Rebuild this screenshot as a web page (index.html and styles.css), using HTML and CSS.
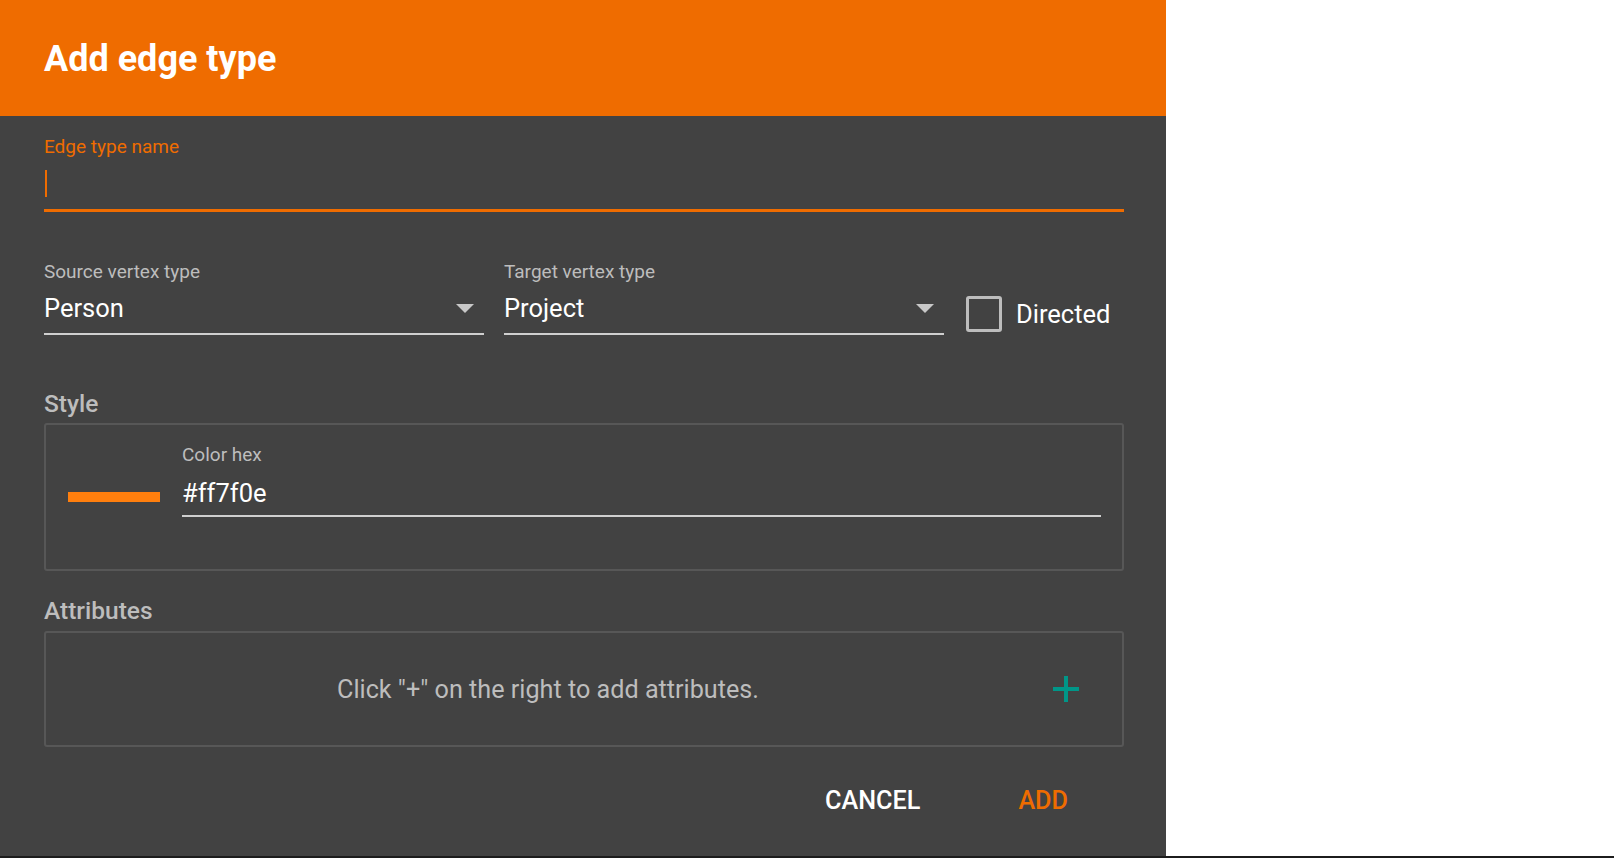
FILE: index.html
```html
<!DOCTYPE html>
<html lang="en">
<head>
    <meta charset="UTF-8">
    <meta name="viewport" content="width=device-width, initial-scale=1.0">
    <title>Add edge type</title>
    <link rel="stylesheet" href="styles.css">
</head>
<body>
    <div class="page">
        <div class="dialog">
            <header class="dialog-title">
                <h1>Add edge type</h1>
            </header>
            <main class="dialog-content">
                <div class="name-field">
                    <label class="field-label focused">Edge type name</label>
                    <div class="name-input"><span class="caret"></span></div>
                </div>

                <div class="type-row">
                    <div class="select-field">
                        <label class="field-label">Source vertex type</label>
                        <div class="select-value">
                            <span>Person</span>
                            <span class="arrow"></span>
                        </div>
                    </div>
                    <div class="select-field">
                        <label class="field-label">Target vertex type</label>
                        <div class="select-value">
                            <span>Project</span>
                            <span class="arrow"></span>
                        </div>
                    </div>
                    <label class="checkbox">
                        <span class="box"></span>
                        <span>Directed</span>
                    </label>
                </div>

                <h2 class="section-title">Style</h2>
                <div class="panel style-panel">
                    <span class="swatch"></span>
                    <div class="hex-field">
                        <label class="field-label">Color hex</label>
                        <div class="hex-value">#ff7f0e</div>
                    </div>
                </div>

                <h2 class="section-title attributes-title">Attributes</h2>
                <div class="panel attributes-panel">
                    <p class="empty-text">Click "+" on the right to add attributes.</p>
                    <button class="add-attr" type="button">
                        <svg width="26" height="26" viewBox="0 0 26 26">
                            <path d="M13 0v26M0 13h26" stroke="#009688" stroke-width="4" fill="none"/>
                        </svg>
                    </button>
                </div>
            </main>
            <div class="dialog-actions">
                <button type="button" class="text-button">Cancel</button>
                <button type="button" class="text-button primary">Add</button>
            </div>
        </div>
        <div class="backdrop"></div>
    </div>
    <div class="bottom-strip"></div>
</body>
</html>
```

FILE: styles.css
```css
body {
    margin: 0;
    padding: 0;
    background-color: #ffffff;
    font-family: Roboto, "Liberation Sans", Arial, sans-serif;
}
.page {
    display: flex;
    height: 856px;
}
.dialog {
    width: 1166px;
    background-color: #424242;
    display: flex;
    flex-direction: column;
}
.backdrop {
    flex: 1;
    background-color: #ffffff;
}
.bottom-strip {
    height: 2px;
    background-color: #1c1c1c;
}
.dialog-title {
    height: 116px;
    background-color: #ef6c00;
    display: flex;
    align-items: center;
    padding-left: 44px;
}
.dialog-title h1 {
    margin: 0;
    margin-top: 2px;
    color: #ffffff;
    font-size: 36px;
    font-weight: 700;
}
.dialog-content {
    padding: 0 42px 0 44px;
}
.field-label {
    display: block;
    font-size: 19px;
    line-height: 20px;
    color: #bdbdbd;
}
.field-label.focused {
    color: #ef6c00;
}
.name-field {
    margin-top: 21px;
}
.name-input {
    height: 52px;
    border-bottom: 3px solid #ef6c00;
    display: flex;
    align-items: center;
}
.caret {
    display: block;
    width: 2px;
    height: 27px;
    margin-left: 1px;
    margin-top: 1px;
    background-color: #ef6c00;
}
.type-row {
    display: flex;
    align-items: flex-end;
    margin-top: 50px;
}
.select-field {
    width: 440px;
    margin-right: 20px;
}
.select-value {
    margin-top: 11px;
    display: flex;
    align-items: center;
    justify-content: space-between;
    padding-bottom: 10px;
    border-bottom: 2px solid #cfcfcf;
    font-size: 25.5px;
    line-height: 30px;
    color: #ffffff;
}
.arrow {
    width: 0;
    height: 0;
    margin-right: 10px;
    border-left: 9px solid transparent;
    border-right: 9px solid transparent;
    border-top: 9px solid #c8c8c8;
}
.checkbox {
    display: flex;
    align-items: center;
    margin-left: 2px;
    margin-bottom: 3px;
    font-size: 25.5px;
    line-height: 30px;
    color: #ffffff;
}
.box {
    width: 30px;
    height: 30px;
    border: 3px solid #bdbdbd;
    border-radius: 3px;
    margin-right: 14px;
}
.section-title {
    margin: 55px 0 5px;
    font-size: 24.5px;
    line-height: 28px;
    font-weight: 500;
    color: #bdbdbd;
}
.attributes-title {
    margin-top: 26px;
    margin-bottom: 6px;
}
.panel {
    border: 2px solid #575757;
    border-radius: 3px;
    display: flex;
    align-items: center;
}
.style-panel {
    height: 144px;
    padding: 0 21px 0 22px;
}
.swatch {
    width: 92px;
    height: 10px;
    background-color: #ff7f0e;
    margin-right: 22px;
}
.hex-field {
    flex: 1;
    align-self: flex-start;
    margin-top: 20px;
}
.hex-value {
    margin-top: 13px;
    padding-bottom: 7px;
    border-bottom: 2px solid #cfcfcf;
    font-size: 25.5px;
    line-height: 30px;
    color: #ffffff;
}
.attributes-panel {
    height: 112px;
    padding: 0 32px 0 0;
}
.empty-text {
    flex: 1;
    margin: 0;
    padding-left: 8px;
    text-align: center;
    font-size: 25.2px;
    color: #bdbdbd;
}
.add-attr {
    width: 48px;
    height: 48px;
    padding: 0;
    border: none;
    background: none;
    display: flex;
    align-items: center;
    justify-content: center;
    cursor: pointer;
}
.dialog-actions {
    display: flex;
    justify-content: flex-end;
    gap: 42px;
    padding-right: 70px;
    margin-top: 28px;
}
.text-button {
    background: none;
    border: none;
    padding: 12px 28px;
    font-family: Roboto, "Liberation Sans", Arial, sans-serif;
    font-size: 25.2px;
    line-height: 28px;
    font-weight: 500;
    text-transform: uppercase;
    color: #ffffff;
    cursor: pointer;
}
.text-button.primary {
    color: #ef6c00;
}
```
